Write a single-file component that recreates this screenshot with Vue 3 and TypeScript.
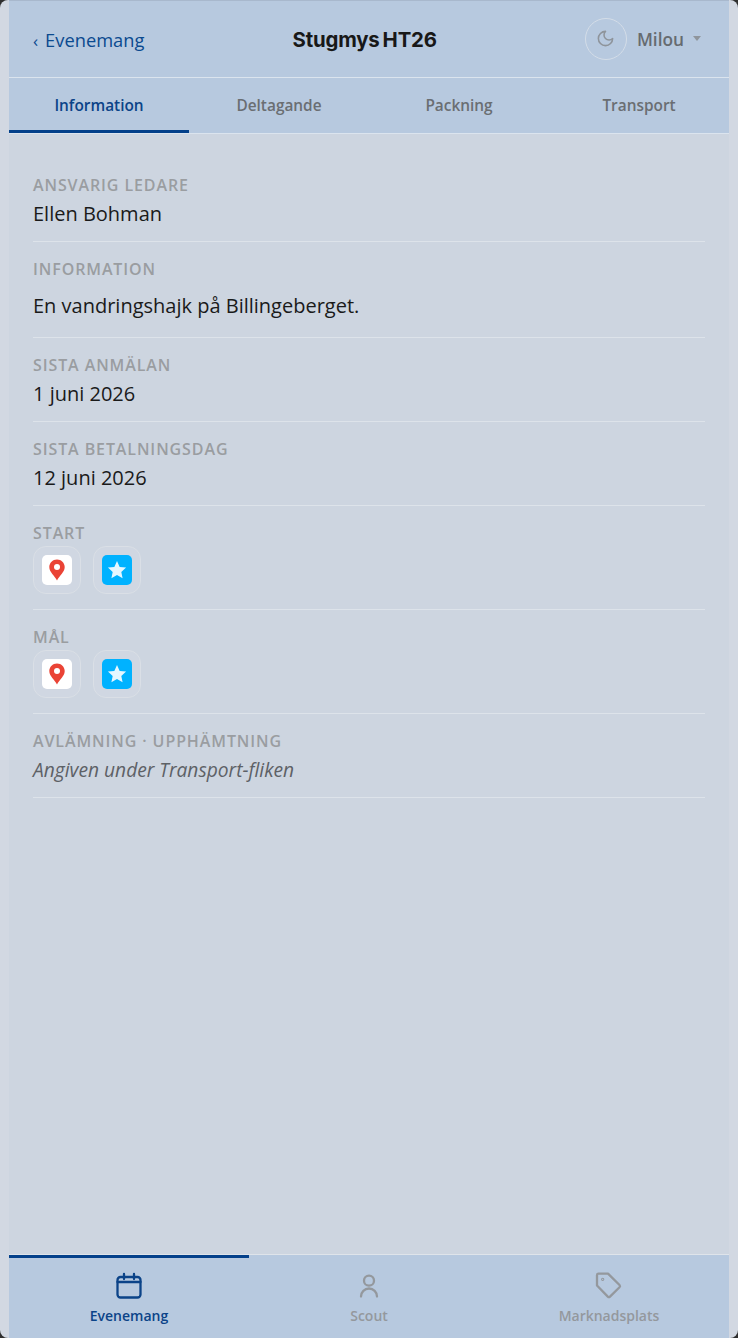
<script setup lang="ts">
interface TabItem {
  label: string;
  active?: boolean;
}

const tabs: TabItem[] = [
  {label: "Information", active: true},
  {label: "Deltagande"},
  {label: "Packning"},
  {label: "Transport"},
];
</script>

<template>
  <div class="frame">
    <div class="app">
      <header class="topbar">
        <a class="back"><span class="chevron">‹</span>Evenemang</a>
        <h1 class="title">Stugmys HT26</h1>
        <div class="user">
          <button class="theme-btn" aria-label="Mörkt läge">
            <svg width="19" height="19" viewBox="0 0 24 24" fill="none" stroke="currentColor" stroke-width="2" stroke-linecap="round" stroke-linejoin="round">
              <path d="M12 3a6 6 0 0 0 9 9 9 9 0 1 1-9-9Z" />
            </svg>
          </button>
          <span class="user-name">Milou</span>
          <span class="caret"></span>
        </div>
      </header>

      <nav class="tabs">
        <div v-for="tab in tabs" :key="tab.label" :class="['tab', { active: tab.active }]">{{ tab.label }}</div>
      </nav>

      <main class="content">
        <section class="row">
          <div class="label">Ansvarig ledare</div>
          <div class="value">Ellen Bohman</div>
        </section>
        <section class="row">
          <div class="label">Information</div>
          <div class="value description">En vandringshajk på Billingeberget.</div>
        </section>
        <section class="row">
          <div class="label">Sista anmälan</div>
          <div class="value">1 juni 2026</div>
        </section>
        <section class="row">
          <div class="label">Sista betalningsdag</div>
          <div class="value">12 juni 2026</div>
        </section>
        <section v-for="place in ['Start', 'Mål']" :key="place" class="row">
          <div class="label">{{ place }}</div>
          <div class="map-links">
            <a class="map-btn">
              <span class="map-icon google">
                <svg width="16" height="22" viewBox="0 0 16 22">
                  <path fill="#ea4335" d="M8 0.500C3.700 0.500 0.300 3.900 0.300 8.100c0 5.200 5.500 8.900 7.700 13.400 2.200-4.500 7.700-8.200 7.700-13.400C15.700 3.900 12.300 0.500 8 0.500z" />
                  <circle cx="8" cy="8" r="3" fill="#fff" />
                </svg>
              </span>
            </a>
            <a class="map-btn">
              <span class="map-icon waze">
                <svg width="22" height="22" viewBox="0 0 24 24">
                  <path fill="#e6f7ff" d="M12 2.200l2.900 6.400 7 .8-5.200 4.700 1.400 6.900L12 17.500l-6.100 3.500 1.400-6.900L2.100 9.400l7-.8z" />
                </svg>
              </span>
            </a>
          </div>
        </section>
        <section class="row">
          <div class="label">Avlämning · Upphämtning</div>
          <div class="value note">Angiven under Transport-fliken</div>
        </section>
      </main>

      <footer class="bottom-nav">
        <div class="nav-item active">
          <svg width="28" height="28" viewBox="0 0 28 28" fill="none" stroke="currentColor" stroke-width="2.300" stroke-linecap="round" stroke-linejoin="round">
            <rect x="2.500" y="5" width="23" height="20.500" rx="3" />
            <path d="M2.500 10h23M9 2v5M19 2v5" />
          </svg>
          <span>Evenemang</span>
        </div>
        <div class="nav-item">
          <svg width="28" height="28" viewBox="0 0 28 28" fill="none" stroke="currentColor" stroke-width="2.300" stroke-linecap="round" stroke-linejoin="round">
            <circle cx="14" cy="8.700" r="5" />
            <path d="M6 24.500a8 8 0 0 1 16 0" />
          </svg>
          <span>Scout</span>
        </div>
        <div class="nav-item">
          <svg width="28" height="28" viewBox="0 0 28 28" fill="none" stroke="currentColor" stroke-width="2.300" stroke-linecap="round" stroke-linejoin="round">
            <path d="M3.500 1.600H13L24.500 13a1.600 1.600 0 0 1 0 2.200L15 24.600a1.600 1.600 0 0 1-2.200 0L2 13.500V3a1.500 1.500 0 0 1 1.500-1.400z" />
            <circle cx="7.700" cy="7.300" r="0.500" />
          </svg>
          <span>Marknadsplats</span>
        </div>
      </footer>
    </div>
  </div>
</template>

<style>
html,
body {
  margin: 0;
  background: #2f2f2f;
}
</style>

<style scoped>
.frame {
  box-sizing: border-box;
  height: 1338px;
  padding: 0 9px;
  border-radius: 8px;
  background: #d2d8e2;
  font-family: "Open Sans", "Noto Sans", "Liberation Sans", sans-serif;
  overflow: hidden;
}

.app {
  display: flex;
  flex-direction: column;
  height: 100%;
  background: #cdd5e0;
}

.topbar {
  display: flex;
  justify-content: space-between;
  align-items: center;
  height: 77px;
  padding: 0 28px 0 24px;
  background: #b7c9df;
  border-bottom: 1px solid #dbe4ee;
  box-shadow: inset 0 1px 0 #a8b8cd;
}

.back {
  padding-top: 2px;
  color: #0b4a8f;
  font-size: 18.300px;
}

.chevron {
  margin-right: 7px;
  font-size: 17px;
}

.title {
  margin: 0;
  padding-top: 2px;
  color: #181818;
  font-family: Inter, Roboto, sans-serif;
  font-size: 20.400px;
  font-weight: 700;
  letter-spacing: -0.2px;
  word-spacing: -1.500px;
}

.user {
  display: flex;
  align-items: center;
  justify-content: flex-end;
  color: #666b70;
}

.theme-btn {
  display: flex;
  align-items: center;
  justify-content: center;
  width: 42px;
  height: 42px;
  padding: 0;
  border: 1px solid #d4dde8;
  border-radius: 50%;
  background: transparent;
  color: #8e949b;
}

.user-name {
  margin-left: 10px;
  padding-top: 2px;
  font-size: 17.300px;
  font-weight: 600;
}

.caret {
  margin-left: 9px;
  border-top: 5px solid #8f959c;
  border-left: 4px solid transparent;
  border-right: 4px solid transparent;
}

.tabs {
  display: grid;
  grid-template-columns: repeat(4, 1fr);
  height: 55px;
  background: #b7c9df;
  border-bottom: 1px solid #dbe4ee;
}

.tab {
  display: flex;
  align-items: center;
  justify-content: center;
  padding-top: 2px;
  border-bottom: 3px solid transparent;
  color: #6a6e72;
  font-size: 15.400px;
  font-weight: 600;
}

.tab.active {
  border-bottom-color: #03408a;
  color: #0b4388;
}

.content {
  flex: 1;
  padding: 24px 24px 0;
}

.row {
  padding: 15px 0 11px;
  border-bottom: 1px solid #dde3ea;
}

.label {
  color: #9a9da1;
  font-size: 16px;
  font-weight: 600;
  letter-spacing: 0.9px;
  line-height: 24px;
  text-transform: uppercase;
}

.value {
  margin-top: 1px;
  color: #1a1a1a;
  font-size: 20px;
  line-height: 32px;
}

.description {
  padding: 8px 0 4px;
}

.note {
  color: #5d6166;
  font-size: 19.200px;
  font-style: italic;
}

.map-links {
  display: flex;
  gap: 12px;
  margin: 1px 0 4px;
}

.map-btn {
  display: flex;
  align-items: center;
  justify-content: center;
  width: 48px;
  height: 48px;
  box-sizing: border-box;
  border: 1px solid #dadfe6;
  border-radius: 13px;
  background: #d0d7e2;
}

.map-icon {
  display: flex;
  align-items: center;
  justify-content: center;
  width: 30px;
  height: 30px;
  border-radius: 5px;
}

.google {
  background: #fff;
}

.waze {
  background: #00b2ff;
}

.bottom-nav {
  display: grid;
  grid-template-columns: repeat(3, 1fr);
  height: 84px;
  background: #b7c9df;
  border-top: 1px solid #dfe4ea;
  box-sizing: border-box;
}

.nav-item {
  display: flex;
  flex-direction: column;
  align-items: center;
  gap: 6px;
  padding-top: 14px;
  border-top: 3px solid transparent;
  color: #94989d;
  font-size: 14px;
  line-height: 19px;
  font-weight: 600;
}

.nav-item.active {
  border-top-color: #03408a;
  color: #0b4388;
}
</style>
